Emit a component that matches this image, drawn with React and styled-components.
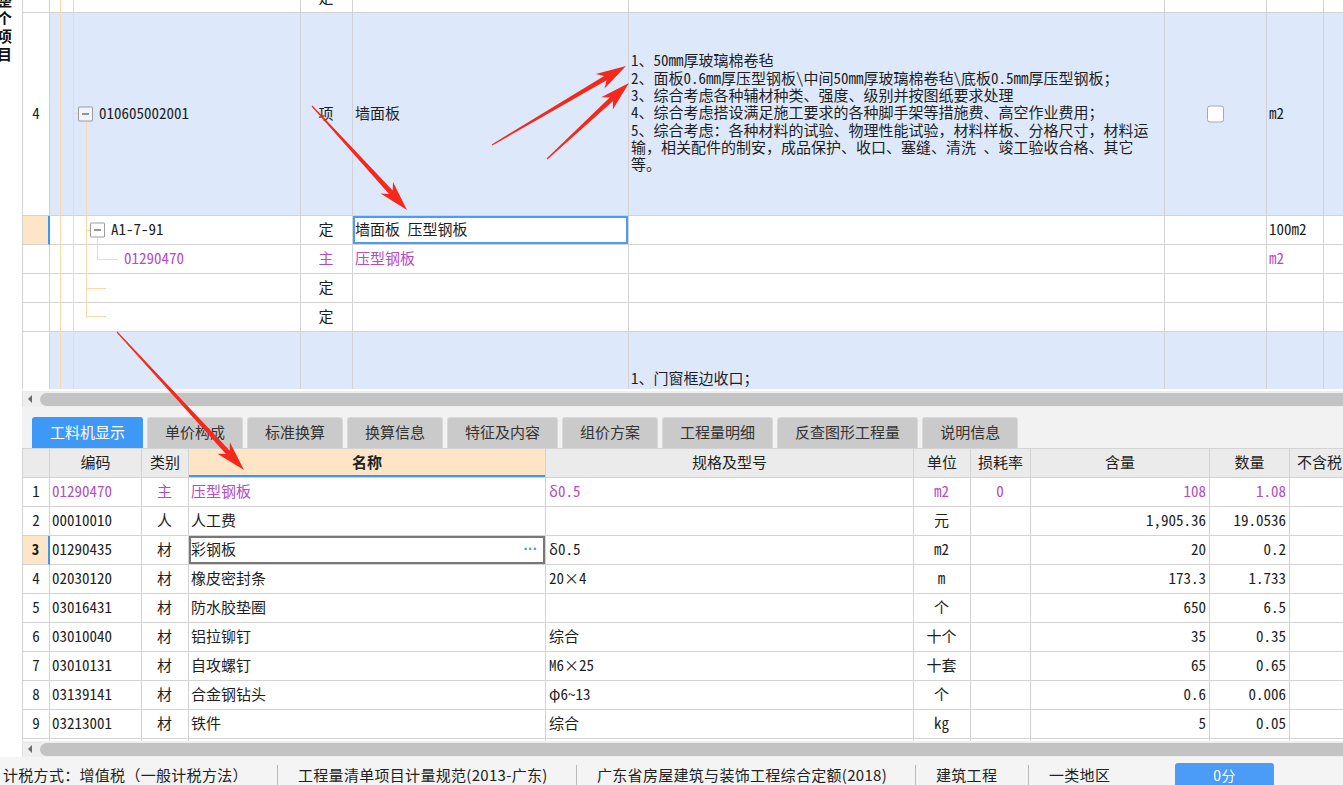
import React from "react";
import styled, { createGlobalStyle } from "styled-components";

const GRID_FONT = `"Noto Sans Mono CJK SC", "Noto Sans CJK SC", "DejaVu Sans", sans-serif`;
const UI_FONT = `"Noto Sans CJK SC", "Noto Sans", sans-serif`;
const LINE = "#d3d3d3";
const BLUE_ROW = "#dde9fb";
const PURPLE = "#b44cc8";
const ACCENT = "#3d96f5";
const ORANGE_CELL = "#fde6c8";
const TREE = "#ffd6a6";

const TOP_COLS = "27px 251px 52px 276px 536px 102px 57px 80px";
const BOTTOM_COLS = "27px 92px 47px 357px 368px 57px 60px 179px 80px 120px";

const Global = createGlobalStyle`
  *, *::before, *::after { box-sizing: border-box; }
  html, body { margin: 0; padding: 0; background: #fff; overflow: hidden; }
  #root { width: 1343px; height: 785px; }
`;

const Page = styled.div`
  position: relative;
  width: 1343px;
  height: 785px;
  overflow: hidden;
  display: flex;
  flex-direction: column;
  background: #fff;
  font-family: ${UI_FONT};
  color: #222;
`;

const Workspace = styled.div`
  display: flex;
  height: 757px;
  flex: none;
`;

const SideStrip = styled.div`
  width: 22px;
  flex: none;
  background: #fff;
  overflow: hidden;
`;

const SideTitle = styled.div`
  width: 15px;
  margin: -9px 0 0 -3px;
  font: bold 15px/18px ${UI_FONT};
  color: #111;
  word-break: break-all;
`;

const Main = styled.div`
  flex: 1;
  min-width: 0;
  display: flex;
  flex-direction: column;
  background: #f2f2f2;
  overflow: hidden;
`;

/* ---------- grids ---------- */

const TopGrid = styled.div`
  position: relative;
  height: 389px;
  flex: none;
  overflow: hidden;
  background: #fff;
  border-left: 1px solid ${LINE};
  font: 15px/17px ${GRID_FONT};
`;

const TopRow = styled.div`
  display: grid;
  grid-template-columns: ${TOP_COLS};
  height: ${(p) => p.$h || 29}px;
  background: ${(p) => p.$bg || "#fff"};
  flex: none;
`;

const ClippedRow = styled(TopRow)`
  margin-top: -16px;
`;

const Cell = styled.div`
  display: flex;
  align-items: center;
  justify-content: ${(p) =>
    p.$align === "center" ? "center" : p.$align === "right" ? "flex-end" : "flex-start"};
  padding: ${(p) => p.$pad || "0 3px 0 2px"};
  padding-bottom: 3px;
  border-right: 1px solid ${LINE};
  border-bottom: 1px solid ${LINE};
  color: ${(p) => (p.$purple ? PURPLE : "#1e1e1e")};
  white-space: nowrap;
  overflow: hidden;
  min-width: 0;
`;

const NumCell = styled(Cell)`
  justify-content: center;
  padding: 0 0 3px 0;
  background: ${(p) => (p.$active ? ORANGE_CELL : "#fff")};
  font-weight: ${(p) => (p.$active ? "bold" : "normal")};
  border-right: ${(p) => (p.$active ? `2px solid ${ACCENT}` : `1px solid ${LINE}`)};
`;

const EditCell = styled(Cell)`
  background: #fff;
  box-shadow: inset 0 0 0 2px ${(p) => (p.$dark ? "#777" : "#4a9cf5")};
  justify-content: space-between;
`;

const FeatureCell = styled(Cell)`
  flex-direction: column;
  align-items: flex-start;
  justify-content: ${(p) => (p.$top ? "flex-start" : "center")};
  padding: ${(p) => (p.$top ? "37px 3px 0 2px" : "0 3px 4px 2px")};
  line-height: 17.3px;
`;

const FeatureLine = styled.span`
  display: block;
`;

const TreeToggle = styled.span`
  position: relative;
  width: 15px;
  height: 15px;
  flex: none;
  border: 1px solid #9c9c9c;
  border-radius: 1px;
  background: rgba(255, 255, 255, 0.55);
  margin: 0 6px 0 0;
  transform: translateY(1.5px);
  &::after {
    content: "";
    position: absolute;
    left: 3px;
    right: 3px;
    top: 6px;
    height: 1px;
    background: #333;
  }
`;

const CheckBox = styled.span`
  width: 17px;
  height: 17px;
  border: 1px solid #a8a8a8;
  border-radius: 3px;
  background: #fff;
  transform: translateY(1.5px);
`;

const TreeSvg = styled.svg`
  position: absolute;
  left: 0;
  top: 0;
  pointer-events: none;
`;

/* ---------- scrollbars ---------- */

const HScroll = styled.div`
  height: ${(p) => p.$h}px;
  flex: none;
  display: flex;
  align-items: center;
  padding-left: 5px;
  background: #eeeeee;
  border-left: 1px solid #e2e2e2;
  border-top: ${(p) => (p.$line ? "2px solid #fff" : "none")};
`;

const ScrollArrow = styled.span`
  width: 0;
  height: 0;
  flex: none;
  border-top: 4px solid transparent;
  border-bottom: 4px solid transparent;
  border-right: 4px solid #6a6a6a;
  margin-right: 8px;
`;

const ScrollThumb = styled.div`
  flex: 1;
  height: 13px;
  border-radius: 7px;
  background: #c3c3c3;
  margin-right: -10px;
`;

/* ---------- tabs ---------- */

const TabBar = styled.div`
  height: 41px;
  flex: none;
  display: flex;
  align-items: flex-end;
  gap: 4px;
  padding-left: 10px;
  background: #f2f2f2;
`;

const Tab = styled.div`
  height: 31px;
  padding: 0 17px 3px;
  display: flex;
  align-items: center;
  font: 15px/1 ${UI_FONT};
  white-space: nowrap;
  border-radius: 3px 3px 0 0;
  background: ${(p) => (p.$active ? "#3e98f6" : "#cacaca")};
  color: ${(p) => (p.$active ? "#fff" : "#333")};
  border: 1px solid ${(p) => (p.$active ? "#3e98f6" : "#d9d9d9")};
  border-bottom: none;
`;

/* ---------- bottom grid ---------- */

const BottomGrid = styled.div`
  height: 293px;
  flex: none;
  overflow: hidden;
  background: #fff;
  border-left: 1px solid ${LINE};
  border-top: 1px solid ${LINE};
  font: 15px/17px ${GRID_FONT};
`;

const BottomRow = styled.div`
  display: grid;
  grid-template-columns: ${BOTTOM_COLS};
  height: 29px;
`;

const HeadCell = styled(Cell)`
  justify-content: ${(p) => (p.$left ? "flex-start" : "center")};
  padding: ${(p) => (p.$left ? "0 0 3px 7px" : "0 0 3px 0")};
  background: ${(p) => (p.$hl ? "#fde5c6" : "#ebebeb")};
  font-family: ${UI_FONT};
  font-weight: ${(p) => (p.$hl ? "bold" : "normal")};
  color: #222;
  box-shadow: ${(p) => (p.$hl ? `inset 0 -2px 0 ${ACCENT}` : "none")};
`;

const MoreDots = styled.span`
  color: #4a9af5;
  font: bold 12px/1 "DejaVu Sans", sans-serif;
  margin-right: 5px;
`;

/* ---------- status bar ---------- */

const StatusBar = styled.div`
  height: 28px;
  flex: none;
  display: flex;
  align-items: flex-end;
  background: #f4f4f4;
  font: 15px/20px ${UI_FONT};
  letter-spacing: 0.3px;
  color: #222;
  overflow: hidden;
`;

const StatusItem = styled.div`
  width: ${(p) => p.$w}px;
  height: 20px;
  flex: none;
  padding-left: ${(p) => (p.$first ? 3 : 20)}px;
  border-left: ${(p) => (p.$first ? "none" : "1px solid #b9b9b9")};
  white-space: nowrap;
  overflow: hidden;
`;

const ScoreButton = styled.div`
  width: 99px;
  height: 22px;
  margin-left: 33px;
  border-radius: 3px 3px 0 0;
  background: #4a9cf7;
  color: #fff;
  text-align: center;
  line-height: 24px;
  font-size: 14px;
`;

/* ---------- annotation arrows ---------- */

const Overlay = styled.svg`
  position: absolute;
  left: 0;
  top: 0;
  pointer-events: none;
  z-index: 5;
`;

function arrowPoints([tx, ty], [hx, hy]) {
  const dx = hx - tx;
  const dy = hy - ty;
  const L = Math.hypot(dx, dy);
  const ux = dx / L;
  const uy = dy / L;
  const nx = -uy;
  const ny = ux;
  const hl = 30;
  const hw = 8.5;
  const sw = 2.5;
  const tw = 0.6;
  const bx = hx - ux * hl;
  const by = hy - uy * hl;
  const kx = bx + ux * 6;
  const ky = by + uy * 6;
  const pts = [
    [tx + nx * tw, ty + ny * tw],
    [kx + nx * sw, ky + ny * sw],
    [bx + nx * hw, by + ny * hw],
    [hx, hy],
    [bx - nx * hw, by - ny * hw],
    [kx - nx * sw, ky - ny * sw],
    [tx - nx * tw, ty - ny * tw],
  ];
  return pts.map((p) => p.map((v) => v.toFixed(1)).join(",")).join(" ");
}

const ARROWS = [
  [[312, 106], [407, 210]],
  [[492, 145], [626, 66]],
  [[547, 159], [629, 83]],
  [[117, 332], [244, 470]],
];

const FEATURES = [
  "1、50mm厚玻璃棉卷毡",
  "2、面板0.6mm厚压型钢板\\中间50mm厚玻璃棉卷毡\\底板0.5mm厚压型钢板；",
  "3、综合考虑各种辅材种类、强度、级别并按图纸要求处理",
  "4、综合考虑搭设满足施工要求的各种脚手架等措施费、高空作业费用；",
  "5、综合考虑：各种材料的试验、物理性能试验，材料样板、分格尺寸，材料运",
  "输，相关配件的制安，成品保护、收口、塞缝、清洗 、竣工验收合格、其它",
  "等。",
];

const TABS = ["工料机显示", "单价构成", "标准换算", "换算信息", "特征及内容", "组价方案", "工程量明细", "反查图形工程量", "说明信息"];

const HEADERS = ["", "编码", "类别", "名称", "规格及型号", "单位", "损耗率", "含量", "数量", "不含税"];

const MATERIALS = [
  { n: 1, code: "01290470", type: "主", name: "压型钢板", spec: "δ0.5", unit: "m2", loss: "0", qty: "108", amount: "1.08", main: true },
  { n: 2, code: "00010010", type: "人", name: "人工费", spec: "", unit: "元", loss: "", qty: "1,905.36", amount: "19.0536" },
  { n: 3, code: "01290435", type: "材", name: "彩钢板", spec: "δ0.5", unit: "m2", loss: "", qty: "20", amount: "0.2", active: true },
  { n: 4, code: "02030120", type: "材", name: "橡皮密封条", spec: "20×4", unit: "m", loss: "", qty: "173.3", amount: "1.733" },
  { n: 5, code: "03016431", type: "材", name: "防水胶垫圈", spec: "", unit: "个", loss: "", qty: "650", amount: "6.5" },
  { n: 6, code: "03010040", type: "材", name: "铝拉铆钉", spec: "综合", unit: "十个", loss: "", qty: "35", amount: "0.35" },
  { n: 7, code: "03010131", type: "材", name: "自攻螺钉", spec: "M6×25", unit: "十套", loss: "", qty: "65", amount: "0.65" },
  { n: 8, code: "03139141", type: "材", name: "合金钢钻头", spec: "φ6~13", unit: "个", loss: "", qty: "0.6", amount: "0.006" },
  { n: 9, code: "03213001", type: "材", name: "铁件", spec: "综合", unit: "kg", loss: "", qty: "5", amount: "0.05" },
];

function TreeLines() {
  const h = (y, x1, x2) => <line x1={x1} y1={y + 0.5} x2={x2} y2={y + 0.5} />;
  const v = (x, y1, y2) => <line x1={x + 0.5} y1={y1} x2={x + 0.5} y2={y2} />;
  return (
    <TreeSvg width="300" height="389" stroke={TREE} strokeWidth="1" shapeRendering="crispEdges">
      {v(37, 0, 389)}
      {v(50, 0, 389)}
      {h(113, 50, 55)}
      {v(63, 122, 317)}
      {h(230, 63, 67)}
      {v(74, 238, 260)}
      {h(259, 74, 95)}
      {h(288, 63, 83)}
      {h(316, 63, 83)}
    </TreeSvg>
  );
}

function EmptyCells({ count }) {
  return Array.from({ length: count }, (_, i) => <Cell key={i} />);
}

export default function App() {
  return (
    <>
      <Global />
      <Page>
        <Workspace>
          <SideStrip>
            <SideTitle>整个项目</SideTitle>
          </SideStrip>
          <Main>
            <TopGrid>
              <ClippedRow>
                <NumCell />
                <Cell />
                <Cell $align="center">定</Cell>
                <EmptyCells count={5} />
              </ClippedRow>

              <TopRow $h={203} $bg={BLUE_ROW}>
                <NumCell>4</NumCell>
                <Cell $pad="0 0 0 28px">
                  <TreeToggle />
                  010605002001
                </Cell>
                <Cell $align="center">项</Cell>
                <Cell>墙面板</Cell>
                <FeatureCell>
                  {FEATURES.map((l) => (
                    <FeatureLine key={l}>{l}</FeatureLine>
                  ))}
                </FeatureCell>
                <Cell $align="center">
                  <CheckBox />
                </Cell>
                <Cell>m2</Cell>
                <Cell />
              </TopRow>

              <TopRow>
                <NumCell $active />
                <Cell $pad="0 0 0 40px">
                  <TreeToggle />
                  A1-7-91
                </Cell>
                <Cell $align="center">定</Cell>
                <EditCell>墙面板 压型钢板</EditCell>
                <Cell />
                <Cell />
                <Cell>100m2</Cell>
                <Cell />
              </TopRow>

              <TopRow>
                <NumCell />
                <Cell $pad="0 0 0 74px" $purple>
                  01290470
                </Cell>
                <Cell $align="center" $purple>
                  主
                </Cell>
                <Cell $purple>压型钢板</Cell>
                <Cell />
                <Cell />
                <Cell $purple>m2</Cell>
                <Cell />
              </TopRow>

              <TopRow>
                <NumCell />
                <Cell />
                <Cell $align="center">定</Cell>
                <EmptyCells count={5} />
              </TopRow>

              <TopRow>
                <NumCell />
                <Cell />
                <Cell $align="center">定</Cell>
                <EmptyCells count={5} />
              </TopRow>

              <TopRow $h={130} $bg={BLUE_ROW}>
                <NumCell />
                <Cell />
                <Cell />
                <Cell />
                <FeatureCell $top>
                  <FeatureLine>1、门窗框边收口；</FeatureLine>
                </FeatureCell>
                <Cell />
                <Cell />
                <Cell />
              </TopRow>

              <TreeLines />
            </TopGrid>

            <HScroll $h={18} $line>
              <ScrollArrow />
              <ScrollThumb />
            </HScroll>

            <TabBar>
              {TABS.map((t, i) => (
                <Tab key={t} $active={i === 0}>
                  {t}
                </Tab>
              ))}
            </TabBar>

            <BottomGrid>
              <BottomRow>
                {HEADERS.map((h, i) => (
                  <HeadCell key={i} $hl={h === "名称"} $left={i === 9}>
                    {h}
                  </HeadCell>
                ))}
              </BottomRow>
              {MATERIALS.map((m) => {
                const P = m.main;
                return (
                  <BottomRow key={m.n}>
                    <NumCell $active={m.active}>{m.n}</NumCell>
                    <Cell $purple={P}>{m.code}</Cell>
                    <Cell $align="center" $purple={P}>
                      {m.type}
                    </Cell>
                    {m.active ? (
                      <EditCell $dark>
                        {m.name}
                        <MoreDots>···</MoreDots>
                      </EditCell>
                    ) : (
                      <Cell $purple={P}>{m.name}</Cell>
                    )}
                    <Cell $purple={P} $pad="0 3px 0 3px">
                      {m.spec}
                    </Cell>
                    <Cell $align="center" $purple={P}>
                      {m.unit}
                    </Cell>
                    <Cell $align="center" $purple={P}>
                      {m.loss}
                    </Cell>
                    <Cell $align="right" $purple={P}>
                      {m.qty}
                    </Cell>
                    <Cell $align="right" $purple={P}>
                      {m.amount}
                    </Cell>
                    <Cell />
                  </BottomRow>
                );
              })}
              <BottomRow>
                <NumCell />
                <EmptyCells count={9} />
              </BottomRow>
            </BottomGrid>

            <HScroll $h={16}>
              <ScrollArrow />
              <ScrollThumb />
            </HScroll>
          </Main>
        </Workspace>

        <StatusBar>
          <StatusItem $first $w={277}>计税方式：增值税（一般计税方法）</StatusItem>
          <StatusItem $w={299}>工程量清单项目计量规范(2013-广东)</StatusItem>
          <StatusItem $w={339}>广东省房屋建筑与装饰工程综合定额(2018)</StatusItem>
          <StatusItem $w={113}>建筑工程</StatusItem>
          <StatusItem $w={114}>一类地区</StatusItem>
          <ScoreButton>0分</ScoreButton>
        </StatusBar>

        <Overlay width="1343" height="785">
          {ARROWS.map(([t, h], i) => (
            <polygon key={i} points={arrowPoints(t, h)} fill="#f5281c" />
          ))}
        </Overlay>
      </Page>
    </>
  );
}
